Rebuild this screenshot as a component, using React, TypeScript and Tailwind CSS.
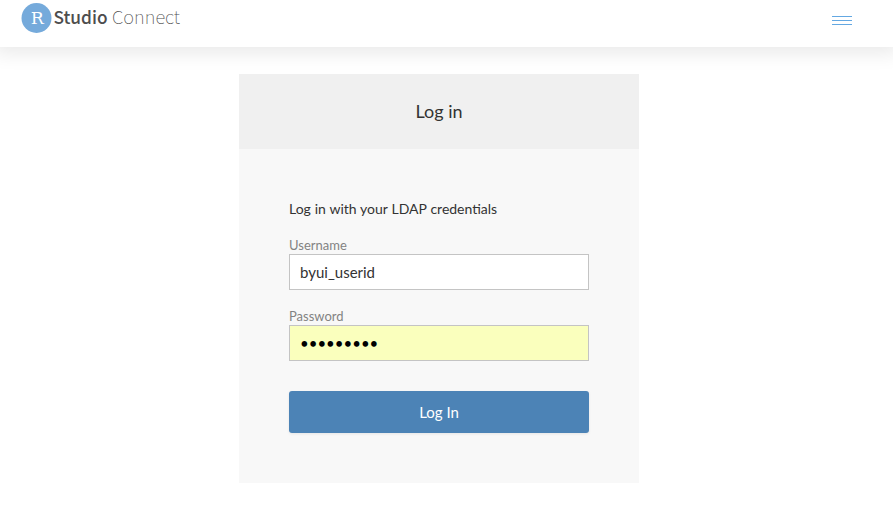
import React from 'react';

function Logo() {
  return (
    <svg className="block h-[40px] w-[190px]" viewBox="0 0 190 40" role="img" aria-label="RStudio Connect">
      <circle cx="36.5" cy="18" r="15" fill="#75aadb" />
      <text x="30.8" y="24" textLength="13" lengthAdjust="spacingAndGlyphs" fill="#fff" className="font-['DejaVu_Serif',serif] text-[17.5px]">R</text>
      <text x="53.5" y="24" textLength="54" lengthAdjust="spacingAndGlyphs" fill="#4d4d4d" className="font-['Noto_Sans_CJK_JP',sans-serif] text-[17.5px] font-medium">Studio</text>
      <text x="112" y="24" textLength="68" lengthAdjust="spacingAndGlyphs" fill="#4d4d4d" className="font-['Noto_Sans_CJK_JP',sans-serif] text-[17.5px] font-thin">Connect</text>
    </svg>
  );
}

export default function App() {
  return (
    <div className="h-[508px] overflow-hidden bg-white font-[Lato,sans-serif] text-[#333]">
      <header className="flex h-[47px] justify-between bg-white shadow-[0_0_20px_6px_rgba(0,0,0,0.09)]">
        <Logo />
        <button aria-label="Menu" className="mr-[41px] mt-[16px] flex h-[9px] w-5 flex-col justify-between">
          <span className="h-px w-full bg-[#64a8e2]" />
          <span className="h-px w-full bg-[#64a8e2]" />
          <span className="h-px w-full bg-[#64a8e2]" />
        </button>
      </header>
      <main className="ml-[239px] mt-[27px] h-[409px] w-[400px] bg-[#f8f8f8]">
        <h1 className="flex h-[75px] items-center justify-center bg-[#f0f0f0] text-[18px]">Log in</h1>
        <form className="px-[50px] pt-[50px]">
          <p className="text-[14px] leading-[20px] [word-spacing:0.25px]">Log in with your LDAP credentials</p>
          <label className="mt-[17px] block text-[13px] leading-[18px] text-[#838383]">Username</label>
          <input className="block h-[36px] w-full border border-[#c4c4c4] bg-white px-[10px] text-[15px] outline-none" defaultValue="byui_userid" />
          <label className="mt-[17px] block text-[13px] leading-[18px] text-[#838383]">Password</label>
          <input type="password" className="block h-[36px] w-full border border-[#c4c4c4] bg-[#faffbd] px-[10px] text-[15px] text-black outline-none" defaultValue="password1" />
          <button type="button" className="mt-[30px] h-[42px] w-full rounded-[3px] bg-[#4c83b6] text-[15px] text-white shadow-[0_1px_3px_rgba(0,0,0,0.08)]">Log In</button>
        </form>
      </main>
    </div>
  );
}
